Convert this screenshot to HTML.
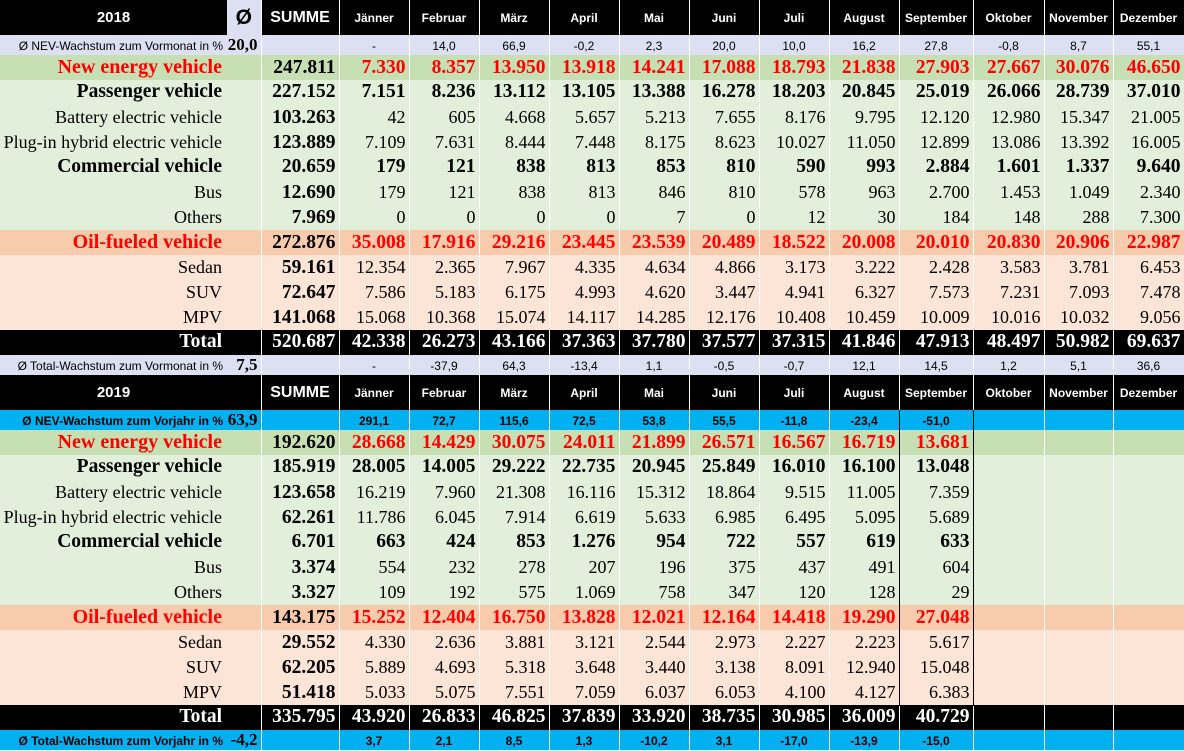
<!DOCTYPE html>
<html><head><meta charset="utf-8"><style>
*{margin:0;padding:0;box-sizing:border-box}
body{width:1184px;height:751px;overflow:hidden;background:#fff;position:relative}
table{border-collapse:collapse;table-layout:fixed;width:1184px}
td{border-right:1px solid #fff;text-align:right;padding:0 3px 0 0;font:18px "Liberation Serif",serif;white-space:nowrap;height:25px;line-height:24px;color:#000;vertical-align:baseline}
td.l,td.z{border-right:none}
td.l{padding-right:5px}
td.z{border-right:1px solid #fff}
td.s{font-weight:bold;font-size:19.5px}
tr.B td{font-weight:bold;font-size:19.5px}
tr.R td.m{color:#f00}
tr.R td.l{color:#f00;font-size:20px}
tr.g td{background:#c6e0b4}
tr.lg td{background:#e2efda}
tr.o td{background:#f8cbad}
tr.lo td{background:#fce4d6}
tr.k td{background:#000;color:#fff;font-weight:bold;font-size:19.5px}
tr.h td{background:#000;color:#fff;font:bold 12px "Liberation Sans",sans-serif;text-align:center;height:35px;padding:0;vertical-align:middle}
tr.h td.y{font-size:15px}
tr.h td.sm{font-size:16px}
tr.h td.zz{background:#dde0f2;color:#000;font:bold 21px "Liberation Sans",sans-serif}
tr.gr td{height:20px;line-height:20px;font:12px "Liberation Sans",sans-serif;text-align:center;padding:0}
tr.gr td.l{text-align:right;padding-right:4px;font-size:12px}
tr.gr td.z{font:bold 17px "Liberation Serif",serif;text-align:right;padding-right:3px}
tr.lav td{background:#dde0f2}
tr.bl td{background:#00b0f0;font-weight:bold}
tr.bl td.l,tr.bl td.z{font-weight:bold}
#sep{position:absolute;left:899px;top:410px;width:75px;height:296px;border-left:1px solid #000;border-right:1px solid #000}
</style></head><body>
<table>
<colgroup><col style="width:227px"><col style="width:34px"><col style="width:78px"><col style="width:70px"><col style="width:70px"><col style="width:70px"><col style="width:70px"><col style="width:70px"><col style="width:70px"><col style="width:70px"><col style="width:70px"><col style="width:74px"><col style="width:71px"><col style="width:69px"><col style="width:71px"></colgroup>
<tr class="h"><td class="l y" style="text-align:center;padding:0">2018</td><td class="zz">Ø</td><td class="sm">SUMME</td><td>Jänner</td><td>Februar</td><td>März</td><td>April</td><td>Mai</td><td>Juni</td><td>Juli</td><td>August</td><td>September</td><td>Oktober</td><td>November</td><td>Dezember</td></tr>
<tr class="gr lav"><td class="l">Ø NEV-Wachstum zum Vormonat in %</td><td class="z">20,0</td><td></td><td>-</td><td>14,0</td><td>66,9</td><td>-0,2</td><td>2,3</td><td>20,0</td><td>10,0</td><td>16,2</td><td>27,8</td><td>-0,8</td><td>8,7</td><td>55,1</td></tr>
<tr class="g B R"><td class="l">New energy vehicle</td><td class="z"></td><td class="s">247.811</td><td class="m">7.330</td><td class="m">8.357</td><td class="m">13.950</td><td class="m">13.918</td><td class="m">14.241</td><td class="m">17.088</td><td class="m">18.793</td><td class="m">21.838</td><td class="m">27.903</td><td class="m">27.667</td><td class="m">30.076</td><td class="m">46.650</td></tr>
<tr class="lg B"><td class="l">Passenger vehicle</td><td class="z"></td><td class="s">227.152</td><td>7.151</td><td>8.236</td><td>13.112</td><td>13.105</td><td>13.388</td><td>16.278</td><td>18.203</td><td>20.845</td><td>25.019</td><td>26.066</td><td>28.739</td><td>37.010</td></tr>
<tr class="lg"><td class="l">Battery electric vehicle</td><td class="z"></td><td class="s">103.263</td><td>42</td><td>605</td><td>4.668</td><td>5.657</td><td>5.213</td><td>7.655</td><td>8.176</td><td>9.795</td><td>12.120</td><td>12.980</td><td>15.347</td><td>21.005</td></tr>
<tr class="lg"><td class="l">Plug-in hybrid electric vehicle</td><td class="z"></td><td class="s">123.889</td><td>7.109</td><td>7.631</td><td>8.444</td><td>7.448</td><td>8.175</td><td>8.623</td><td>10.027</td><td>11.050</td><td>12.899</td><td>13.086</td><td>13.392</td><td>16.005</td></tr>
<tr class="lg B"><td class="l">Commercial vehicle</td><td class="z"></td><td class="s">20.659</td><td>179</td><td>121</td><td>838</td><td>813</td><td>853</td><td>810</td><td>590</td><td>993</td><td>2.884</td><td>1.601</td><td>1.337</td><td>9.640</td></tr>
<tr class="lg"><td class="l">Bus</td><td class="z"></td><td class="s">12.690</td><td>179</td><td>121</td><td>838</td><td>813</td><td>846</td><td>810</td><td>578</td><td>963</td><td>2.700</td><td>1.453</td><td>1.049</td><td>2.340</td></tr>
<tr class="lg"><td class="l">Others</td><td class="z"></td><td class="s">7.969</td><td>0</td><td>0</td><td>0</td><td>0</td><td>7</td><td>0</td><td>12</td><td>30</td><td>184</td><td>148</td><td>288</td><td>7.300</td></tr>
<tr class="o B R"><td class="l">Oil-fueled vehicle</td><td class="z"></td><td class="s">272.876</td><td class="m">35.008</td><td class="m">17.916</td><td class="m">29.216</td><td class="m">23.445</td><td class="m">23.539</td><td class="m">20.489</td><td class="m">18.522</td><td class="m">20.008</td><td class="m">20.010</td><td class="m">20.830</td><td class="m">20.906</td><td class="m">22.987</td></tr>
<tr class="lo"><td class="l">Sedan</td><td class="z"></td><td class="s">59.161</td><td>12.354</td><td>2.365</td><td>7.967</td><td>4.335</td><td>4.634</td><td>4.866</td><td>3.173</td><td>3.222</td><td>2.428</td><td>3.583</td><td>3.781</td><td>6.453</td></tr>
<tr class="lo"><td class="l">SUV</td><td class="z"></td><td class="s">72.647</td><td>7.586</td><td>5.183</td><td>6.175</td><td>4.993</td><td>4.620</td><td>3.447</td><td>4.941</td><td>6.327</td><td>7.573</td><td>7.231</td><td>7.093</td><td>7.478</td></tr>
<tr class="lo"><td class="l">MPV</td><td class="z"></td><td class="s">141.068</td><td>15.068</td><td>10.368</td><td>15.074</td><td>14.117</td><td>14.285</td><td>12.176</td><td>10.408</td><td>10.459</td><td>10.009</td><td>10.016</td><td>10.032</td><td>9.056</td></tr>
<tr class="k"><td class="l">Total</td><td class="z"></td><td>520.687</td><td>42.338</td><td>26.273</td><td>43.166</td><td>37.363</td><td>37.780</td><td>37.577</td><td>37.315</td><td>41.846</td><td>47.913</td><td>48.497</td><td>50.982</td><td>69.637</td></tr>
<tr class="gr lav"><td class="l">Ø Total-Wachstum zum Vormonat in %</td><td class="z">7,5</td><td></td><td>-</td><td>-37,9</td><td>64,3</td><td>-13,4</td><td>1,1</td><td>-0,5</td><td>-0,7</td><td>12,1</td><td>14,5</td><td>1,2</td><td>5,1</td><td>36,6</td></tr>
<tr class="h"><td class="l y" style="text-align:center;padding:0">2019</td><td class="z"></td><td class="sm">SUMME</td><td>Jänner</td><td>Februar</td><td>März</td><td>April</td><td>Mai</td><td>Juni</td><td>Juli</td><td>August</td><td>September</td><td>Oktober</td><td>November</td><td>Dezember</td></tr>
<tr class="gr bl"><td class="l">Ø NEV-Wachstum zum Vorjahr in %</td><td class="z">63,9</td><td></td><td>291,1</td><td>72,7</td><td>115,6</td><td>72,5</td><td>53,8</td><td>55,5</td><td>-11,8</td><td>-23,4</td><td>-51,0</td><td></td><td></td><td></td></tr>
<tr class="g B R"><td class="l">New energy vehicle</td><td class="z"></td><td class="s">192.620</td><td class="m">28.668</td><td class="m">14.429</td><td class="m">30.075</td><td class="m">24.011</td><td class="m">21.899</td><td class="m">26.571</td><td class="m">16.567</td><td class="m">16.719</td><td class="m">13.681</td><td></td><td></td><td></td></tr>
<tr class="lg B"><td class="l">Passenger vehicle</td><td class="z"></td><td class="s">185.919</td><td>28.005</td><td>14.005</td><td>29.222</td><td>22.735</td><td>20.945</td><td>25.849</td><td>16.010</td><td>16.100</td><td>13.048</td><td></td><td></td><td></td></tr>
<tr class="lg"><td class="l">Battery electric vehicle</td><td class="z"></td><td class="s">123.658</td><td>16.219</td><td>7.960</td><td>21.308</td><td>16.116</td><td>15.312</td><td>18.864</td><td>9.515</td><td>11.005</td><td>7.359</td><td></td><td></td><td></td></tr>
<tr class="lg"><td class="l">Plug-in hybrid electric vehicle</td><td class="z"></td><td class="s">62.261</td><td>11.786</td><td>6.045</td><td>7.914</td><td>6.619</td><td>5.633</td><td>6.985</td><td>6.495</td><td>5.095</td><td>5.689</td><td></td><td></td><td></td></tr>
<tr class="lg B"><td class="l">Commercial vehicle</td><td class="z"></td><td class="s">6.701</td><td>663</td><td>424</td><td>853</td><td>1.276</td><td>954</td><td>722</td><td>557</td><td>619</td><td>633</td><td></td><td></td><td></td></tr>
<tr class="lg"><td class="l">Bus</td><td class="z"></td><td class="s">3.374</td><td>554</td><td>232</td><td>278</td><td>207</td><td>196</td><td>375</td><td>437</td><td>491</td><td>604</td><td></td><td></td><td></td></tr>
<tr class="lg"><td class="l">Others</td><td class="z"></td><td class="s">3.327</td><td>109</td><td>192</td><td>575</td><td>1.069</td><td>758</td><td>347</td><td>120</td><td>128</td><td>29</td><td></td><td></td><td></td></tr>
<tr class="o B R"><td class="l">Oil-fueled vehicle</td><td class="z"></td><td class="s">143.175</td><td class="m">15.252</td><td class="m">12.404</td><td class="m">16.750</td><td class="m">13.828</td><td class="m">12.021</td><td class="m">12.164</td><td class="m">14.418</td><td class="m">19.290</td><td class="m">27.048</td><td></td><td></td><td></td></tr>
<tr class="lo"><td class="l">Sedan</td><td class="z"></td><td class="s">29.552</td><td>4.330</td><td>2.636</td><td>3.881</td><td>3.121</td><td>2.544</td><td>2.973</td><td>2.227</td><td>2.223</td><td>5.617</td><td></td><td></td><td></td></tr>
<tr class="lo"><td class="l">SUV</td><td class="z"></td><td class="s">62.205</td><td>5.889</td><td>4.693</td><td>5.318</td><td>3.648</td><td>3.440</td><td>3.138</td><td>8.091</td><td>12.940</td><td>15.048</td><td></td><td></td><td></td></tr>
<tr class="lo"><td class="l">MPV</td><td class="z"></td><td class="s">51.418</td><td>5.033</td><td>5.075</td><td>7.551</td><td>7.059</td><td>6.037</td><td>6.053</td><td>4.100</td><td>4.127</td><td>6.383</td><td></td><td></td><td></td></tr>
<tr class="k"><td class="l">Total</td><td class="z"></td><td>335.795</td><td>43.920</td><td>26.833</td><td>46.825</td><td>37.839</td><td>33.920</td><td>38.735</td><td>30.985</td><td>36.009</td><td>40.729</td><td></td><td></td><td></td></tr>
<tr class="gr bl"><td class="l">Ø Total-Wachstum zum Vorjahr in %</td><td class="z">-4,2</td><td></td><td>3,7</td><td>2,1</td><td>8,5</td><td>1,3</td><td>-10,2</td><td>3,1</td><td>-17,0</td><td>-13,9</td><td>-15,0</td><td></td><td></td><td></td></tr>
</table>
<div id="sep"></div>
</body></html>
